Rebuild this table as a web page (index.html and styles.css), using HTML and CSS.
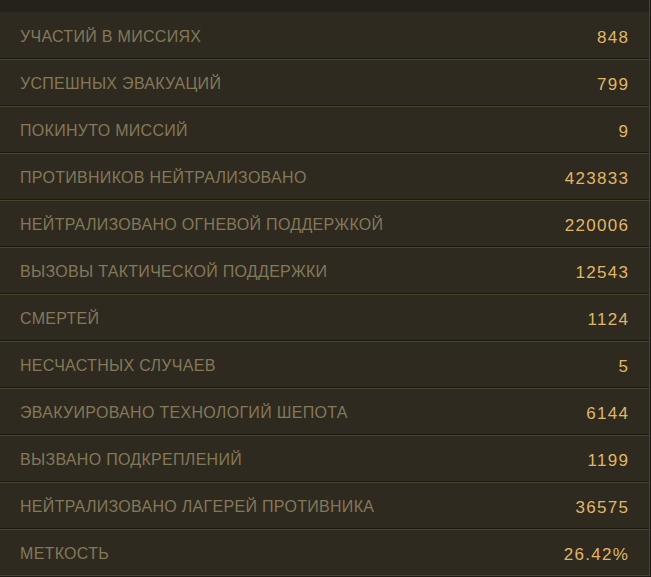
FILE: index.html
```html
<!DOCTYPE html>
<html lang="ru">
<head>
<meta charset="utf-8">
<link rel="stylesheet" href="styles.css">
</head>
<body>
<div class="panel">
  <div class="strip"></div>
  <ul class="stats">
    <li class="row"><span class="label">УЧАСТИЙ В МИССИЯХ</span><span class="value">848</span></li>
    <li class="row"><span class="label">УСПЕШНЫХ ЭВАКУАЦИЙ</span><span class="value">799</span></li>
    <li class="row"><span class="label">ПОКИНУТО МИССИЙ</span><span class="value">9</span></li>
    <li class="row"><span class="label">ПРОТИВНИКОВ НЕЙТРАЛИЗОВАНО</span><span class="value">423833</span></li>
    <li class="row"><span class="label">НЕЙТРАЛИЗОВАНО ОГНЕВОЙ ПОДДЕРЖКОЙ</span><span class="value">220006</span></li>
    <li class="row"><span class="label">ВЫЗОВЫ ТАКТИЧЕСКОЙ ПОДДЕРЖКИ</span><span class="value">12543</span></li>
    <li class="row"><span class="label">СМЕРТЕЙ</span><span class="value">1124</span></li>
    <li class="row"><span class="label">НЕСЧАСТНЫХ СЛУЧАЕВ</span><span class="value">5</span></li>
    <li class="row"><span class="label">ЭВАКУИРОВАНО ТЕХНОЛОГИЙ ШЕПОТА</span><span class="value">6144</span></li>
    <li class="row"><span class="label">ВЫЗВАНО ПОДКРЕПЛЕНИЙ</span><span class="value">1199</span></li>
    <li class="row"><span class="label">НЕЙТРАЛИЗОВАНО ЛАГЕРЕЙ ПРОТИВНИКА</span><span class="value">36575</span></li>
    <li class="row"><span class="label">МЕТКОСТЬ</span><span class="value">26.42%</span></li>
  </ul>
</div>
</body>
</html>
```
FILE: styles.css
```css
html, body {
  margin: 0;
  padding: 0;
  background: #1b1913;
}
.panel {
  width: 649px;
  border-right: 1px solid #4a4434;
  background: #2e2a20;
  font-family: "Liberation Sans", Arial, sans-serif;
}
.strip {
  height: 12px;
  background: #25221b;
}
.stats {
  list-style: none;
  margin: 0;
  padding: 0;
}
.row {
  display: flex;
  align-items: center;
  justify-content: space-between;
  height: 45px;
  padding: 0 20px 0 20px;
  border-top: 1px solid #48432f;
  border-bottom: 1px solid #1a1811;
  line-height: 1;
}
.row:first-child {
  border-top-color: #2b281f;
}
.row:last-child {
  border-bottom-color: #48432f;
}
.label {
  color: #847858;
  font-size: 16px;
  letter-spacing: 0.3px;
  padding-top: 3px;
}
.value {
  color: #e0b666;
  font-size: 17px;
  letter-spacing: 1.3px;
  margin-right: -0.3px;
  padding-top: 3px;
}
```
